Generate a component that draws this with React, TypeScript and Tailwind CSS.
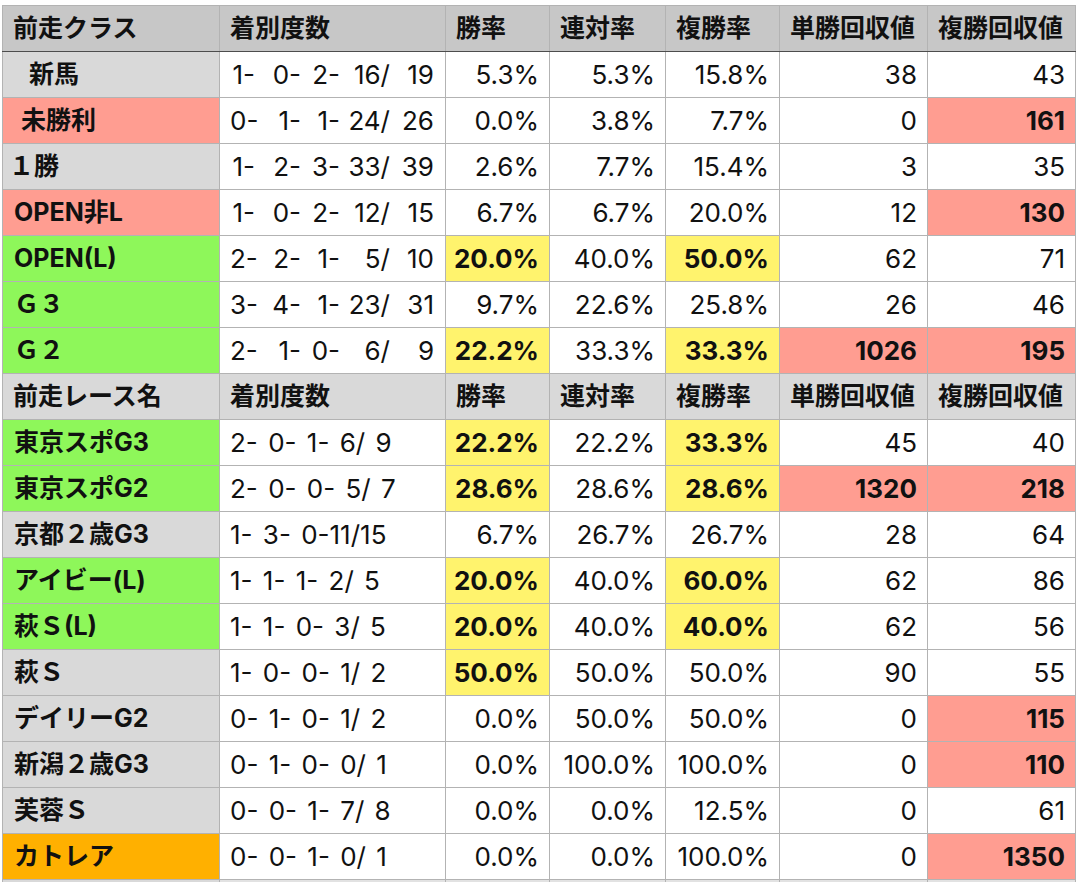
type Tone = "grey" | "pink" | "green" | "orange" | "yellow" | "none";

type Row = {
  label: string;
  tone: Tone;
  indent?: string;
  record: string;
  padded?: boolean;
  win: string;
  winHi?: boolean;
  quinella: string;
  place: string;
  placeHi?: boolean;
  winRet: string;
  winRetHi?: boolean;
  placeRet: string;
  placeRetHi?: boolean;
};

const toneBg: Record<Tone, string> = {
  grey: "bg-[#d9d9d9]",
  pink: "bg-[#ff9d91]",
  green: "bg-[#8ef75a]",
  orange: "bg-[#ffb000]",
  yellow: "bg-[#fff36d]",
  none: "bg-white",
};

const classRows: Row[] = [
  { label: "新馬", tone: "grey", indent: "pl-[26px]", record: "1- 0- 2- 16/ 19", padded: true, win: "5.3%", quinella: "5.3%", place: "15.8%", winRet: "38", placeRet: "43" },
  { label: "未勝利", tone: "pink", indent: "pl-[18px]", record: "0- 1- 1- 24/ 26", padded: true, win: "0.0%", quinella: "3.8%", place: "7.7%", winRet: "0", placeRet: "161", placeRetHi: true },
  { label: "１勝", tone: "grey", indent: "pl-[6px]", record: "1- 2- 3- 33/ 39", padded: true, win: "2.6%", quinella: "7.7%", place: "15.4%", winRet: "3", placeRet: "35" },
  { label: "OPEN非L", tone: "pink", record: "1- 0- 2- 12/ 15", padded: true, win: "6.7%", quinella: "6.7%", place: "20.0%", winRet: "12", placeRet: "130", placeRetHi: true },
  { label: "OPEN(L)", tone: "green", record: "2- 2- 1- 5/ 10", padded: true, win: "20.0%", winHi: true, quinella: "40.0%", place: "50.0%", placeHi: true, winRet: "62", placeRet: "71" },
  { label: "Ｇ３", tone: "green", record: "3- 4- 1- 23/ 31", padded: true, win: "9.7%", quinella: "22.6%", place: "25.8%", winRet: "26", placeRet: "46" },
  { label: "Ｇ２", tone: "green", record: "2- 1- 0- 6/ 9", padded: true, win: "22.2%", winHi: true, quinella: "33.3%", place: "33.3%", placeHi: true, winRet: "1026", winRetHi: true, placeRet: "195", placeRetHi: true },
];

const raceRows: Row[] = [
  { label: "東京スポG3", tone: "green", record: "2- 0- 1- 6/ 9", win: "22.2%", winHi: true, quinella: "22.2%", place: "33.3%", placeHi: true, winRet: "45", placeRet: "40" },
  { label: "東京スポG2", tone: "green", record: "2- 0- 0- 5/ 7", win: "28.6%", winHi: true, quinella: "28.6%", place: "28.6%", placeHi: true, winRet: "1320", winRetHi: true, placeRet: "218", placeRetHi: true },
  { label: "京都２歳G3", tone: "grey", record: "1- 3- 0-11/15", win: "6.7%", quinella: "26.7%", place: "26.7%", winRet: "28", placeRet: "64" },
  { label: "アイビー(L)", tone: "green", record: "1- 1- 1- 2/ 5", win: "20.0%", winHi: true, quinella: "40.0%", place: "60.0%", placeHi: true, winRet: "62", placeRet: "86" },
  { label: "萩Ｓ(L)", tone: "green", record: "1- 1- 0- 3/ 5", win: "20.0%", winHi: true, quinella: "40.0%", place: "40.0%", placeHi: true, winRet: "62", placeRet: "56" },
  { label: "萩Ｓ", tone: "grey", record: "1- 0- 0- 1/ 2", win: "50.0%", winHi: true, quinella: "50.0%", place: "50.0%", winRet: "90", placeRet: "55" },
  { label: "デイリーG2", tone: "grey", record: "0- 1- 0- 1/ 2", win: "0.0%", quinella: "50.0%", place: "50.0%", winRet: "0", placeRet: "115", placeRetHi: true },
  { label: "新潟２歳G3", tone: "grey", record: "0- 1- 0- 0/ 1", win: "0.0%", quinella: "100.0%", place: "100.0%", winRet: "0", placeRet: "110", placeRetHi: true },
  { label: "芙蓉Ｓ", tone: "grey", record: "0- 0- 1- 7/ 8", win: "0.0%", quinella: "0.0%", place: "12.5%", winRet: "0", placeRet: "61" },
  { label: "カトレア", tone: "orange", record: "0- 0- 1- 0/ 1", win: "0.0%", quinella: "0.0%", place: "100.0%", winRet: "0", placeRet: "1350", placeRetHi: true },
];

const columns = ["着別度数", "勝率", "連対率", "複勝率", "単勝回収値", "複勝回収値"];

// padded records line up in fixed-width, right-aligned fields
const fieldWidths = ["w-[25px]", "w-[46px]", "w-[39px]", "w-[50px]", "w-[44px]"];

const cell = "h-[46px] border border-[#b3b3b3] align-middle leading-none";

function Num({ value, hi, tone }: { value: string; hi?: boolean; tone: Tone }) {
  return (
    <td className={`${cell} pr-[10px] text-right text-[26px] ${hi ? `${toneBg[tone]} font-bold` : "bg-white"}`}>
      {value}
    </td>
  );
}

function HeaderRow({ first, top }: { first: string; top?: boolean }) {
  const bg = top ? "bg-[#c7c7c7] border-b-[#4d4d4d]" : "bg-[#d9d9d9]";
  return (
    <tr>
      {[first, ...columns].map((c) => (
        <th key={c} className={`${cell} ${bg} pl-[10px] text-left font-bold`}>
          {c}
        </th>
      ))}
    </tr>
  );
}

function Record({ r }: { r: Row }) {
  if (!r.padded) {
    return <>{r.record}</>;
  }
  return (
    <>
      {r.record.split(" ").map((part, i) => (
        <span key={i} className={`inline-block text-right ${fieldWidths[i]}`}>
          {part}
        </span>
      ))}
    </>
  );
}

function DataRow({ r }: { r: Row }) {
  return (
    <tr>
      <td className={`${cell} ${toneBg[r.tone]} ${r.indent ?? "pl-[11px]"} font-bold`}>{r.label}</td>
      <td className={`${cell} bg-white pl-[10px] text-[26px] whitespace-pre [word-spacing:3px]`}>
        <Record r={r} />
      </td>
      <Num value={r.win} hi={r.winHi} tone="yellow" />
      <Num value={r.quinella} tone="none" />
      <Num value={r.place} hi={r.placeHi} tone="yellow" />
      <Num value={r.winRet} hi={r.winRetHi} tone="pink" />
      <Num value={r.placeRet} hi={r.placeRetHi} tone="pink" />
    </tr>
  );
}

export default function App() {
  return (
    <div className="h-[882px] overflow-hidden bg-white pl-[2px] pt-[5px] text-[25px] text-[#111] font-['Inter','Noto_Sans_CJK_JP',sans-serif]">
      <table className="w-[1073px] table-fixed border-collapse">
        <colgroup>
          <col className="w-[217px]" />
          <col className="w-[226px]" />
          <col className="w-[104px]" />
          <col className="w-[116px]" />
          <col className="w-[114px]" />
          <col className="w-[148px]" />
          <col className="w-[148px]" />
        </colgroup>
        <tbody>
          <HeaderRow first="前走クラス" top />
          {classRows.map((r) => (
            <DataRow key={r.label} r={r} />
          ))}
          <HeaderRow first="前走レース名" />
          {raceRows.map((r) => (
            <DataRow key={r.label} r={r} />
          ))}
          {/* next block starts just below the fold */}
          <tr>
            <td className={`${cell} bg-[#d9d9d9]`} />
            {columns.map((c) => (
              <td key={c} className={`${cell} bg-[#e2e2e2]`} />
            ))}
          </tr>
        </tbody>
      </table>
    </div>
  );
}
